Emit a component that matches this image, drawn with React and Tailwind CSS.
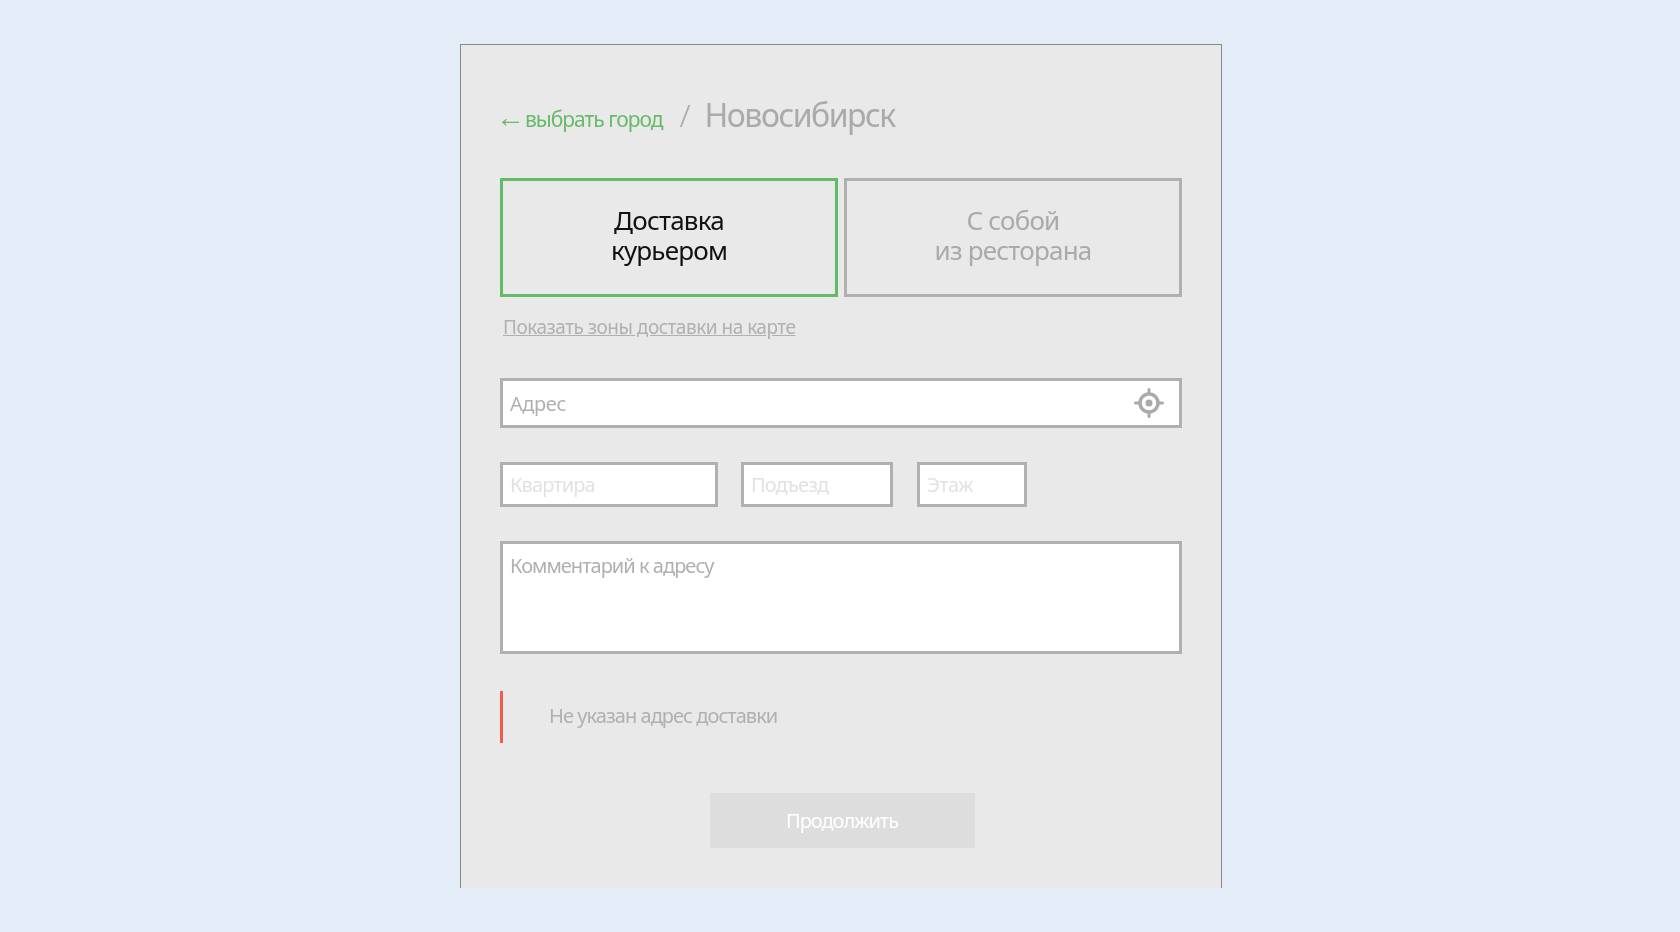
import { Fragment } from "react";

const fieldClass =
  "h-full w-full bg-white border-[3px] border-[#b0b0b0] pl-[7px] text-[20px] outline-none";

const LocateIcon = () => (
  <svg width="30" height="30" viewBox="0 0 30 30" fill="none" stroke="#aaaaaa">
    <circle cx="15" cy="15" r="9" strokeWidth="3.5" />
    <circle cx="15" cy="15" r="3.5" fill="#aaaaaa" stroke="none" />
    <path d="M15 1.5v4M15 24.500v4M1.500 15h4M24.500 15h4" strokeWidth="3" strokeLinecap="round" />
  </svg>
);

const TabButton = ({ lines, active }) => (
  <button
    className={`h-[119px] w-[338px] border-[3px] pb-[6px] text-[26px] leading-[30px] tracking-[-0.8px] ${
      active ? "border-[#62bb67] text-[#111111]" : "border-[#b0b0b0] text-[#aaaaaa]"
    }`}
  >
    {lines.map((line, i) => (
      <Fragment key={line}>
        {i > 0 && <br />}
        {line}
      </Fragment>
    ))}
  </button>
);

const App = () => {
  return (
    <div className="h-[932px] overflow-hidden bg-[#e4ecf7] pt-[44px] font-['Noto_Sans',sans-serif]">
      <div className="ml-[460px] h-[844px] w-[762px] border-x border-t border-[#8a8a8a] bg-[#e9e9e9] px-[39px] pt-[46px] blur-[0.4px]">
        <div className="flex h-[40px] items-baseline text-[#66bb6a]">
          <a className="text-[21px] tracking-[-1px]">
            <span className="ml-[-4px] mr-[1px] text-[29px] font-light leading-none">←</span>
            выбрать город
          </a>
          <span className="ml-[17px] text-[32px] font-light text-[#aaaaaa]">/</span>
          <span className="ml-[14px] text-[32px] tracking-[-1.5px] text-[#aaaaaa]">Новосибирск</span>
        </div>

        <div className="mt-[47px] flex gap-[6px]">
          <TabButton lines={["Доставка", "курьером"]} active />
          <TabButton lines={["С собой", "из ресторана"]} />
        </div>

        <a className="ml-[3px] mt-[17px] block text-[19px] leading-[26px] tracking-[-0.5px] text-[#b0b0b0] underline">
          Показать зоны доставки на карте
        </a>

        <div className="relative mt-[38px] h-[50px]">
          <input className={`${fieldClass} tracking-[-0.4px] placeholder:text-[#b0b0b0]`} placeholder="Адрес" />
          <span className="absolute right-[18px] top-[10px]">
            <LocateIcon />
          </span>
        </div>

        <div className="mt-[34px] flex h-[45px] gap-[23px]">
          <div className="w-[218px]">
            <input className={`${fieldClass} tracking-[-0.9px] placeholder:text-[#e2e2e2]`} placeholder="Квартира" />
          </div>
          <div className="w-[152px]">
            <input className={`${fieldClass} tracking-[-0.9px] placeholder:text-[#e2e2e2]`} placeholder="Подъезд" />
          </div>
          <div className="ml-[1px] w-[110px]">
            <input className={`${fieldClass} tracking-[-0.6px] placeholder:text-[#e2e2e2]`} placeholder="Этаж" />
          </div>
        </div>

        <textarea
          className={`${fieldClass} mt-[34px] block !h-[113px] resize-none pt-[8px] leading-[28px] tracking-[-0.97px] placeholder:text-[#b0b0b0]`}
          placeholder="Комментарий к адресу"
        />

        <div className="mt-[37px] flex h-[52px] items-center border-l-[3px] border-[#f05a50] pb-[2px] pl-[46px] text-[20px] tracking-[-0.95px] text-[#b0b0b0]">
          Не указан адрес доставки
        </div>

        <div className="mt-[50px] flex justify-center">
          <button className="ml-[2px] h-[55px] w-[265px] bg-[#dddddd] text-[20px] tracking-[-1px] text-white">
            Продолжить
          </button>
        </div>
      </div>
    </div>
  );
};

export default App;
